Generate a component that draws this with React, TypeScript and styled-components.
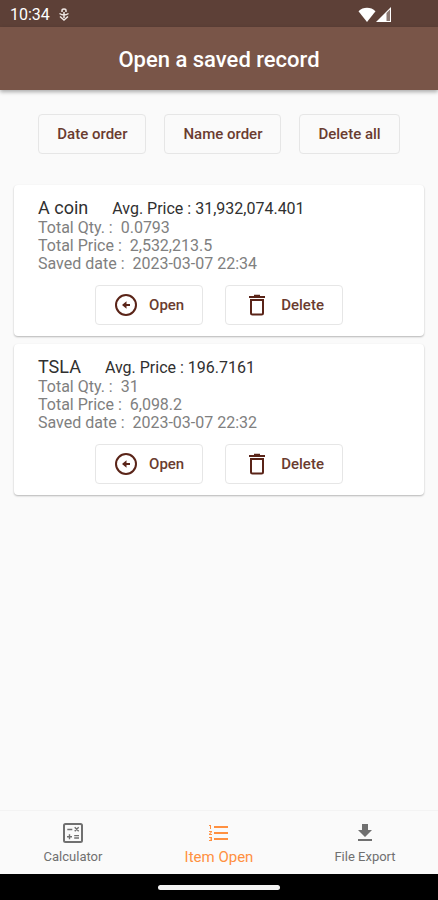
import React from "react";
import styled, { createGlobalStyle } from "styled-components";

const GlobalStyle = createGlobalStyle`
  *, *::before, *::after { box-sizing: border-box; }
  body {
    margin: 0;
    background: #fafafa;
    font-family: Roboto, "Liberation Sans", sans-serif;
  }
  button { font-family: inherit; cursor: pointer; }
`;

const Screen = styled.div`
  display: flex;
  flex-direction: column;
  min-height: 100vh;
  background: #fafafa;
`;

const StatusBar = styled.div`
  display: flex;
  align-items: center;
  justify-content: space-between;
  height: 27px;
  padding: 2px 47px 0 10px;
  background: #5d4037;
  color: #fff;
  font-size: 16px;
  line-height: 24px;
`;

const StatusGroup = styled.div<{ $gap: number }>`
  display: flex;
  align-items: center;
  gap: ${(p) => p.$gap}px;
`;

const AppBar = styled.header`
  display: flex;
  align-items: center;
  justify-content: center;
  height: 63px;
  padding-top: 2px;
  background: #795548;
  color: #fff;
  box-shadow: 0 2px 4px rgba(0, 0, 0, 0.32);
`;

const Title = styled.h1`
  margin: 0;
  font-size: 22px;
  line-height: 28px;
  font-weight: 500;
`;

const Content = styled.main`
  flex: 1;
  padding: 24px 14px;
`;

const Toolbar = styled.div`
  display: flex;
  justify-content: center;
  gap: 18px;
  margin-bottom: 31px;
`;

const OutlineButton = styled.button`
  display: inline-flex;
  align-items: center;
  justify-content: center;
  gap: 11px;
  height: 40px;
  padding: 0 18px;
  border: 1px solid #e6e6e6;
  border-radius: 4px;
  background: transparent;
  color: #6a3c30;
  font-size: 15px;
  line-height: 20px;
  font-weight: 500;
  white-space: nowrap;
`;

const RecordList = styled.ul`
  display: flex;
  flex-direction: column;
  gap: 8px;
  margin: 0;
  padding: 0;
  list-style: none;
`;

const RecordCard = styled.li`
  padding: 12px 24px 11px;
  border-radius: 4px;
  background: #fff;
  box-shadow: 0 1px 2px rgba(0, 0, 0, 0.28);
`;

const RecordHead = styled.div`
  display: flex;
  align-items: baseline;
  gap: 24px;
  line-height: 21px;
  color: #303030;
`;

const RecordName = styled.h2`
  margin: 0;
  font-size: 18px;
  font-weight: 400;
`;

const AveragePrice = styled.span`
  font-size: 16px;
`;

const Detail = styled.p`
  margin: 0;
  color: #808080;
  font-size: 16px;
  line-height: 18px;
  white-space: pre-wrap;
`;

const Actions = styled.div`
  display: flex;
  justify-content: center;
  gap: 22px;
  margin-top: 12px;
`;

const BottomNav = styled.nav`
  display: grid;
  grid-template-columns: repeat(3, 1fr);
  height: 64px;
  border-top: 1px solid #f3f3f3;
  background: #fafafa;
`;

const NavItem = styled.button<{ $active?: boolean }>`
  display: flex;
  flex-direction: column;
  align-items: center;
  justify-content: flex-start;
  gap: 2px;
  padding: 10px 0 0;
  border: 0;
  background: transparent;
  color: ${(p) => (p.$active ? "#ff9040" : "#707070")};
  font-size: ${(p) => (p.$active ? 15 : 13)}px;
  line-height: 20px;
`;

const SystemBar = styled.div`
  display: flex;
  align-items: center;
  justify-content: center;
  height: 26px;
  background: #000;
`;

const HomeHandle = styled.div`
  width: 122px;
  height: 5px;
  border-radius: 3px;
  background: #f4f4f4;
`;

type IconProps = { path: string };

const Icon = ({ path }: IconProps) => (
  <svg width="24" height="24" viewBox="0 0 24 24" fill="currentColor" aria-hidden="true">
    <path d={path} />
  </svg>
);

const ICONS = {
  list: "M2 17h2v.5H3v1h1v.5H2v1h3v-4H2v1zm1-9h1V4H2v1h1v3zm-1 3h1.8L2 13.1v.9h3v-1H3.2L5 10.9V10H2v1zm5-6v2h14V5H7zm0 14h14v-2H7v2zm0-6h14v-2H7v2z",
  download: "M19 9h-4V3H9v6H5l7 7 7-7zM5 18v2h14v-2H5z",
};

const OpenIcon = () => (
  <svg width="24" height="24" viewBox="0 0 24 24" fill="none" stroke="#5a2418" strokeWidth="2" aria-hidden="true">
    <circle cx="12" cy="12" r="10" />
    <path d="M9 12H16" />
    <path d="M12.5 8.2V15.8L8 12Z" fill="#5a2418" stroke="none" />
  </svg>
);

const TrashIcon = () => (
  <svg width="26" height="24" viewBox="0 0 26 24" fill="none" stroke="#5a2418" strokeWidth="2" aria-hidden="true">
    <path d="M5 4H21M10 2.7H16" />
    <path d="M7 7H19V20Q19 21.5 17.5 21.5H8.5Q7 21.5 7 20Z" />
  </svg>
);

const CalculatorIcon = () => (
  <svg width="24" height="24" viewBox="0 0 24 24" fill="none" stroke="currentColor" aria-hidden="true">
    <rect x="3" y="3" width="18" height="18" rx="1.5" strokeWidth="2" />
    <path
      d="M6.3 8.5h5M13.7 6.2l4 4M17.7 6.2l-4 4M6 15.7h5M8.5 13.2v5M13.2 14.6h4.8M13.2 17h4.8"
      strokeWidth="1.4"
    />
  </svg>
);

const DebugIcon = () => (
  <svg width="12" height="14" viewBox="0 0 12 14" fill="none" stroke="#f0e8e5" strokeWidth="1.5" aria-hidden="true">
    <path d="M4 4V2.5Q4 1 6 1T8 2.5V4" />
    <path d="M1.5 5.5Q6 8.5 10.5 5.5M2 8.5L6 12L10 8.5M6 4V10" />
  </svg>
);

const WifiIcon = () => (
  <svg width="18" height="16" viewBox="0 0 18 16" fill="currentColor" aria-hidden="true">
    <path d="M9 15L.5 4.2C5-.3 13-.3 17.5 4.2Z" />
  </svg>
);

const SignalIcon = () => (
  <svg width="15" height="15" viewBox="0 0 15 15" aria-hidden="true">
    <path d="M0 15L15 0V15Z" fill="#fff" />
    <path d="M10.5 6L14 2.5V14H10.5Z" fill="#8c7973" />
  </svg>
);

const records = [
  { name: "A coin", average: "31,932,074.401", quantity: "0.0793", total: "2,532,213.5", saved: "2023-03-07 22:34" },
  { name: "TSLA", average: "196.7161", quantity: "31", total: "6,098.2", saved: "2023-03-07 22:32" },
];

export default function App() {
  return (
    <>
      <GlobalStyle />
      <Screen>
        <StatusBar>
          <StatusGroup $gap={8}>
            <span>10:34</span>
            <DebugIcon />
          </StatusGroup>
          <StatusGroup $gap={0}>
            <WifiIcon />
            <SignalIcon />
          </StatusGroup>
        </StatusBar>
        <AppBar>
          <Title>Open a saved record</Title>
        </AppBar>
        <Content>
          <Toolbar>
            <OutlineButton type="button">Date order</OutlineButton>
            <OutlineButton type="button">Name order</OutlineButton>
            <OutlineButton type="button">Delete all</OutlineButton>
          </Toolbar>
          <RecordList>
            {records.map((record) => (
              <RecordCard key={record.name}>
                <RecordHead>
                  <RecordName>{record.name}</RecordName>
                  <AveragePrice>Avg. Price : {record.average}</AveragePrice>
                </RecordHead>
                <Detail>{`Total Qty. :  ${record.quantity}`}</Detail>
                <Detail>{`Total Price :  ${record.total}`}</Detail>
                <Detail>{`Saved date :  ${record.saved}`}</Detail>
                <Actions>
                  <OutlineButton type="button">
                    <OpenIcon />
                    Open
                  </OutlineButton>
                  <OutlineButton type="button">
                    <TrashIcon />
                    Delete
                  </OutlineButton>
                </Actions>
              </RecordCard>
            ))}
          </RecordList>
        </Content>
        <BottomNav>
          <NavItem type="button">
            <CalculatorIcon />
            Calculator
          </NavItem>
          <NavItem type="button" $active aria-current="page">
            <Icon path={ICONS.list} />
            Item Open
          </NavItem>
          <NavItem type="button">
            <Icon path={ICONS.download} />
            File Export
          </NavItem>
        </BottomNav>
        <SystemBar>
          <HomeHandle />
        </SystemBar>
      </Screen>
    </>
  );
}
